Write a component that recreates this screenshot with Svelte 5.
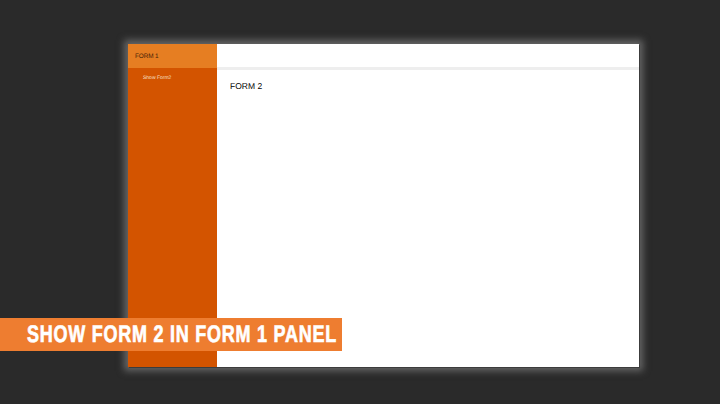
<script lang="ts">
	let title = 'FORM 1';
	let link = 'Show Form2';
	let body = 'FORM 2';
	let banner = 'SHOW FORM 2 IN FORM 1 PANEL';
</script>

<div class="stage">
	<div class="window">
		<aside class="sidebar">
			<div class="brand">{title}</div>
			<nav class="menu">{link}</nav>
		</aside>
		<main class="content">
			<div class="topbar"></div>
			<div class="panel">{body}</div>
		</main>
	</div>
	<div class="banner"><span>{banner}</span></div>
</div>

<style>
	:global(body) {
		margin: 0;
		background: #2a2a2a;
	}

	.stage {
		position: relative;
		width: 720px;
		height: 404px;
		box-sizing: border-box;
		padding: 44px 81px 37px 128px;
		background: #2a2a2a;
		overflow: hidden;
		font-family: "Liberation Sans", Arial, sans-serif;
		text-rendering: geometricPrecision;
	}

	.window {
		display: flex;
		height: 100%;
		background: #fff;
		box-shadow: 1px 1px 0 0 #3c3c3c, 0 0 7px 4px #666;
	}

	.sidebar {
		width: 89px;
		flex: none;
		background: #d35400;
		display: flex;
		flex-direction: column;
	}

	.brand {
		height: 24px;
		background: #e67e22;
		color: #4a2408;
		font-size: 6.4px;
		letter-spacing: -0.1px;
		line-height: 25px;
		padding-left: 7px;
	}

	.menu {
		color: #f8e0cc;
		font-size: 5px;
		line-height: 8px;
		padding: 6px 0 0 15px;
	}

	.content {
		flex: 1;
		display: flex;
		flex-direction: column;
	}

	.topbar {
		height: 23px;
		border-bottom: 3px solid #eeeeee;
	}

	.panel {
		padding: 10px 13px;
		color: #000;
		font-size: 8.5px;
		line-height: 12px;
	}

	.banner {
		position: absolute;
		left: 0;
		top: 318px;
		width: 342px;
		height: 33px;
		box-sizing: border-box;
		padding-left: 27px;
		background: #ee7d30;
		color: #fff;
		font-size: 24px;
		font-weight: 700;
		line-height: 33px;
		white-space: nowrap;
	}

	.banner span {
		display: inline-block;
		letter-spacing: 1px;
		transform: scaleX(0.75);
		transform-origin: left center;
		-webkit-text-stroke: 0.7px #fff;
	}
</style>
